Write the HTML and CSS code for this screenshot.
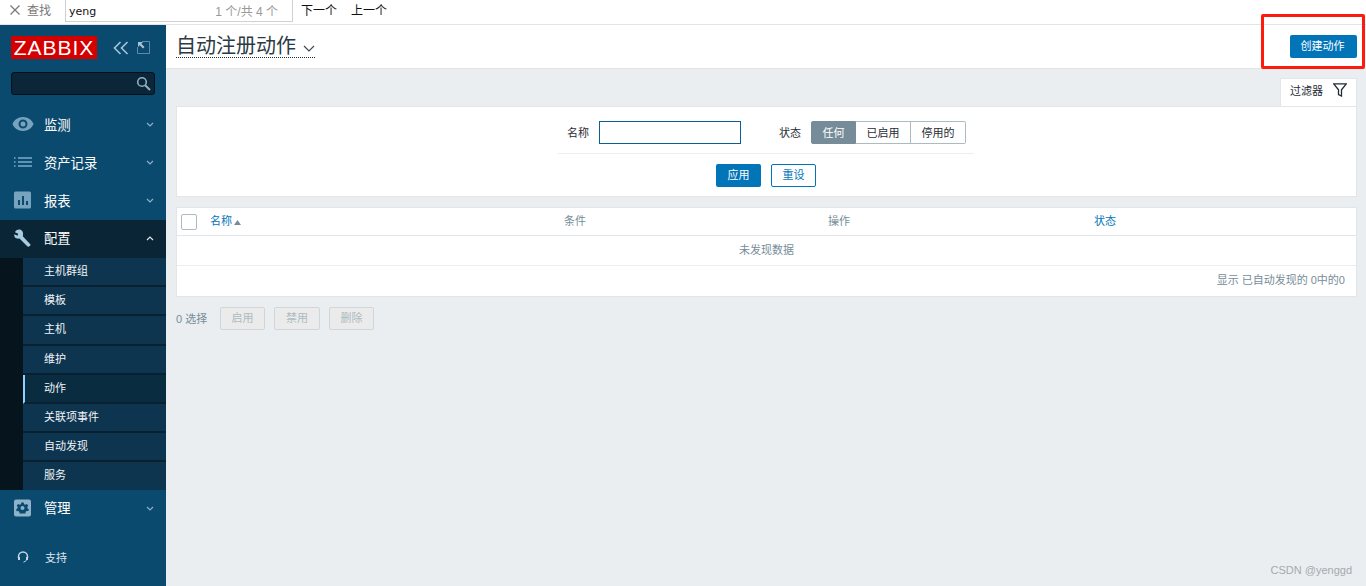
FILE: index.html
```html
<!DOCTYPE html>
<html lang="zh">
<head>
<meta charset="utf-8">
<title>自动注册动作</title>
<link rel="stylesheet" href="styles.css">
</head>
<body>
<div class="findbar">
  <svg class="find-x" width="10" height="10" viewBox="0 0 10 10"><path d="M0.5 0.5L9.5 9.5M9.5 0.5L0.5 9.5" stroke="#777" stroke-width="1.2" fill="none"/></svg>
  <span class="find-label">查找</span>
  <div class="find-input"><span class="find-q">yeng</span><span class="find-count">1 个/共 4 个</span></div>
  <span class="find-btn find-next">下一个</span>
  <span class="find-btn">上一个</span>
</div>
<div class="app">
  <aside class="sidebar">
    <div class="brand">
      <div class="logo">ZABBIX</div>
      <svg class="collapse" width="16" height="14" viewBox="0 0 16 14"><path d="M7.5 1L1.5 7L7.5 13M14.5 1L8.5 7L14.5 13" stroke="#a9c4d6" stroke-width="1.6" fill="none"/></svg>
      <svg class="kiosk" width="13" height="13" viewBox="0 0 13 13"><path d="M5 .5H12.5V12.5H.5V6" stroke="#5d8aa6" fill="none"/><path d="M1 1H6L4.3 2.7L7.5 6L6 7.5L2.7 4.3L1 6Z" fill="#a9c4d6"/></svg>
    </div>
    <div class="search">
      <svg width="15" height="15" viewBox="0 0 15 15"><circle cx="6" cy="6" r="4.3" stroke="#8fb0c4" stroke-width="1.6" fill="none"/><path d="M9.2 9.2L14 14" stroke="#8fb0c4" stroke-width="2" fill="none"/></svg>
    </div>
    <nav class="menu">
      <div class="menu-item">
        <svg class="menu-icon" width="22" height="16" viewBox="0 0 22 16"><path fill-rule="evenodd" d="M11 1C6 1 2 4 0.5 8C2 12 6 15 11 15S20 12 21.500 8C20 4 16 1 11 1ZM11 3.500A4.500 4.500 0 1 1 11 12.500A4.500 4.500 0 1 1 11 3.500Z" fill="#77a3bf"/><circle cx="11" cy="8" r="2.500" fill="#77a3bf"/></svg>
        <span class="menu-text">监测</span>
        <svg class="chev" width="8" height="5" viewBox="0 0 8 5"><path d="M1 1L4 4L7 1" stroke="#8fb0c4" stroke-width="1.200" fill="none"/></svg>
      </div>
      <div class="menu-item">
        <svg class="menu-icon" width="22" height="16" viewBox="0 0 22 16"><path d="M2 2.500H3.500M6 2.500H20M2 6.500H3.500M6 6.500H20M2 10.500H3.500M6 10.500H20" stroke="#5f93b3" stroke-width="2" fill="none" transform="translate(0 1.500)"/></svg>
        <span class="menu-text">资产记录</span>
        <svg class="chev" width="8" height="5" viewBox="0 0 8 5"><path d="M1 1L4 4L7 1" stroke="#8fb0c4" stroke-width="1.200" fill="none"/></svg>
      </div>
      <div class="menu-item">
        <svg class="menu-icon" width="22" height="18" viewBox="0 0 22 18"><rect x="2" y="0.500" width="17" height="17" rx="1.500" fill="#77a3bf"/><path d="M6 9H8V14H6ZM10 5H12V14H10ZM14 10H16V14H14Z" fill="#0b4a6f"/></svg>
        <span class="menu-text">报表</span>
        <svg class="chev" width="8" height="5" viewBox="0 0 8 5"><path d="M1 1L4 4L7 1" stroke="#8fb0c4" stroke-width="1.200" fill="none"/></svg>
      </div>
      <div class="menu-item menu-open">
        <svg class="menu-icon" width="22" height="18" viewBox="0 0 22 18"><path d="M9 1C6.500 0 3.800 1 3 3.200L6.200 4.800L5.500 6.800L2.300 5.200C1.800 8 4 10.200 7.500 9.500L15.500 17.500C16.500 18 18.500 17.200 18.500 15.500L10.800 7.200C11.500 4.500 11 2.200 9 1Z" fill="#a9cbe0"/></svg>
        <span class="menu-text menu-text-open">配置</span>
        <svg class="chev" width="8" height="5" viewBox="0 0 8 5"><path d="M1 4L4 1L7 4" stroke="#dfe8ee" stroke-width="1.200" fill="none"/></svg>
      </div>
      <ul class="submenu">
        <li class="sub-item">主机群组</li>
        <li class="sub-item">模板</li>
        <li class="sub-item">主机</li>
        <li class="sub-item">维护</li>
        <li class="sub-item sub-active">动作</li>
        <li class="sub-item">关联项事件</li>
        <li class="sub-item">自动发现</li>
        <li class="sub-item">服务</li>
      </ul>
      <div class="menu-item">
        <svg class="menu-icon" width="22" height="18" viewBox="0 0 22 18"><rect x="2" y="0.500" width="17" height="17" rx="2" fill="#8db2ca"/><path fill-rule="evenodd" d="M9.300 3.500H11.700L12 5.200L13.300 5.800L14.800 4.900L16.300 6.600L15.300 8L15.600 9.500L16.900 10.200L16.300 12L14.600 11.900L13.500 13L13.500 14.500H7.500V13L6.400 12L4.700 12.200L4.100 10.200L5.400 9.500L5.700 8L4.700 6.600L6.200 4.900L7.700 5.800L9 5.200ZM10.500 7A2 2 0 1 0 10.500 11A2 2 0 1 0 10.500 7Z" fill="#0b4a6f"/></svg>
        <span class="menu-text menu-text-open">管理</span>
        <svg class="chev" width="8" height="5" viewBox="0 0 8 5"><path d="M1 1L4 4L7 1" stroke="#8fb0c4" stroke-width="1.200" fill="none"/></svg>
      </div>
    </nav>
    <div class="support">
      <svg class="support-icon" width="12" height="12" viewBox="0 0 12 12"><path d="M1.500 7V5.500A4.500 4.500 0 0 1 10.500 5.500V7" stroke="#c3d6e2" stroke-width="1.500" fill="none"/><path d="M1 6H3V9H1ZM9 6H11V9H9Z" fill="#c3d6e2"/><path d="M9.500 9.500L6.500 11.200" stroke="#c3d6e2" fill="none"/></svg>
      <span class="support-text">支持</span>
    </div>
  </aside>
  <main class="main">
    <header class="page-head">
      <h1 class="title"><span>自动注册动作</span><svg width="12" height="7" viewBox="0 0 12 7"><path d="M1 1L6 6L11 1" stroke="#3a4b57" stroke-width="1.200" fill="none"/></svg></h1>
      <button class="btn btn-primary btn-create">创建动作</button>
    </header>
    <section class="content">
      <div class="filter-tabs">
        <div class="filter-tab">过滤器<svg width="14" height="14" viewBox="0 0 14 14"><path d="M0.700 0.800H13.300L8.500 6.800V13L5.500 11.500V6.800Z" stroke="#1f2c33" stroke-width="1.300" fill="none"/></svg></div>
      </div>
      <div class="filter-panel">
        <div class="filter-row">
          <label class="f-label">名称</label>
          <div class="f-input"></div>
          <label class="f-label f-status">状态</label>
          <div class="segment">
            <span class="seg seg-on">任何</span>
            <span class="seg">已启用</span>
            <span class="seg">停用的</span>
          </div>
        </div>
        <div class="filter-actions">
          <button class="btn btn-primary btn-act">应用</button>
          <button class="btn btn-outline btn-act">重设</button>
        </div>
      </div>
      <div class="table">
        <div class="t-head">
          <div class="t-check"><span class="checkbox"></span></div>
          <div class="t-col col-name link">名称<svg width="7" height="5" viewBox="0 0 7 5"><path d="M3.500 0L7 5H0Z" fill="#768d99"/></svg></div>
          <div class="t-col col-cond">条件</div>
          <div class="t-col col-op">操作</div>
          <div class="t-col link">状态</div>
        </div>
        <div class="t-empty">未发现数据</div>
        <div class="t-foot">显示 已自动发现的 0中的0</div>
      </div>
      <div class="actions">
        <span class="selected">0 选择</span>
        <button class="btn btn-dis">启用</button>
        <button class="btn btn-dis btn-dis-wide">禁用</button>
        <button class="btn btn-dis">删除</button>
      </div>
    </section>
  </main>
</div>
<div class="annot"></div>
<div class="watermark">CSDN @yenggd</div>
</body>
</html>
```
FILE: styles.css
```css
* { box-sizing: border-box; }
html, body { margin: 0; padding: 0; height: 100%; overflow: hidden; }
body {
  position: relative;
  background: #ebeef0;
  font-family: "Liberation Sans", "Noto Sans CJK SC", sans-serif;
  font-size: 12px;
  color: #1f2c33;
}
.findbar {
  height: 25px;
  background: #fff;
  border-bottom: 1px solid #e3e5e6;
  display: flex;
  align-items: center;
  padding-left: 10px;
}
.find-x { margin: -4px 7px 0 0; }
.find-label { color: #777; width: 38px; font-size: 12px; margin-top: -5px; }
.find-input {
  width: 228px;
  height: 22px;
  margin-top: -2px;
  border: 1px solid #d0d0d0;
  border-top: 0;
  padding: 0 14px 0 3px;
  display: flex;
  justify-content: space-between;
  align-items: center;
}
.find-q { color: #111; font-family: "DejaVu Sans", sans-serif; font-size: 11px; margin-top: 1px; }
.find-count { color: #999; font-size: 12px; }
.find-btn { color: #111; font-size: 12px; margin-left: 14px; margin-top: -5px; }
.find-next { margin-left: 8px; }
.app { display: flex; height: 561px; }
.sidebar {
  width: 166px;
  flex: none;
  background: #0b4a6f;
  display: flex;
  flex-direction: column;
}
.brand { display: flex; align-items: center; padding: 11px 0 0 11px; height: 34px; }
.logo {
  width: 86px;
  height: 23px;
  background: #d40000;
  color: #fff;
  font-size: 21px;
  line-height: 23px;
  text-align: center;
  letter-spacing: 1px;
}
.collapse { margin-left: 16px; }
.kiosk { margin-left: 8px; }
.search {
  margin: 13px 11px 0;
  height: 23px;
  background: #0b2638;
  border: 1px solid #04121b;
  border-radius: 3px;
  display: flex;
  align-items: center;
  justify-content: flex-end;
  padding-right: 3px;
}
.menu { margin-top: 11px; }
.menu-item {
  height: 38px;
  display: flex;
  align-items: center;
  padding: 0 12px 2px;
  color: #fff;
}
.menu-icon { flex: none; width: 22px; }
.menu-text { font-size: 13.3px; margin: 0 0 0 10px; flex: 1; }
.menu-text-open { margin-top: -2px; }
.chev { flex: none; margin-right: 0; }
.menu-open { background: #0a2535; }
.submenu {
  list-style: none;
  margin: 0;
  padding: 0 0 0 23px;
  background: #05141d;
  height: 232px;
}
.sub-item {
  height: 29.2px;
  line-height: 27px;
  background: #0e3550;
  border-bottom: 2px solid #08202f;
  padding-left: 21px;
  color: #f0f4f6;
  font-size: 11px;
  letter-spacing: 0;
}
.sub-item:first-child { line-height: 26px; }
.sub-item:last-child { height: 27.8px; border-bottom: 0; }
.sub-active { background: #0a2c41; border-left: 2px solid #8fd0ff; padding-left: 19px; }
.support { display: flex; align-items: center; padding: 21px 0 0 17px; }
.support-icon { flex: none; }
.support-text { margin-left: 16px; color: #dce6ec; font-size: 11px; }
.main { flex: 1; min-width: 0; display: flex; flex-direction: column; }
.page-head {
  height: 44px;
  background: #fff;
  border-bottom: 1px solid #e1e4e6;
  display: flex;
  align-items: center;
  justify-content: space-between;
  padding: 0 9px 0 10px;
}
.title {
  margin: 0;
  font-size: 20px;
  font-weight: 400;
  line-height: 20px;
  height: 22px;
  color: #2b3a44;
  border-bottom: 1px dotted #1f2c33;
  display: flex;
  align-items: center;
}
.title svg { margin: 4px 0 0 7px; }
.btn {
  font: inherit;
  font-size: 11px;
  height: 23px;
  padding: 0 0 3px;
  border-radius: 2px;
  border: 1px solid transparent;
}
.btn-primary { background: #0275b8; color: #fff; }
.btn-outline { background: #fff; color: #0275b8; border-color: #0275b8; }
.btn-create { width: 67px; margin-top: 0; padding-right: 2px; }
.btn-act { width: 45px; }
.btn-dis { width: 45px; background: #ebebeb; border-color: #cfd6da; color: #acbbc2; font-size: 11px; }
.btn-dis-wide { width: 46px; }
.content { padding: 9px 9px 0 10px; }
.filter-tabs { display: flex; justify-content: flex-end; }
.filter-tab {
  width: 77px;
  height: 28px;
  background: #fff;
  border: 1px solid #e3e6e8;
  border-bottom: 0;
  display: flex;
  align-items: center;
  justify-content: space-between;
  padding: 0 9px 6px;
  font-size: 11px;
}
.filter-panel {
  background: #fff;
  border: 1px solid #e3e6e8;
  height: 91px;
  padding-top: 14px;
  display: flex;
  flex-direction: column;
  align-items: center;
}
.filter-row {
  width: 416px;
  height: 33px;
  border-bottom: 1px solid #ebeef0;
  display: flex;
  align-items: flex-start;
  margin-left: -1px;
  padding-left: 9px;
}
.f-label { font-size: 11px; line-height: 25px; }
.f-input {
  width: 142px;
  height: 23px;
  margin-left: 10px;
  border: 1px solid #0b5f92;
}
.f-status { margin-left: 38px; margin-right: 10px; }
.segment { display: flex; height: 23px; }
.seg {
  height: 23px;
  line-height: 22px;
  border: 1px solid #acbbc2;
  border-left: 0;
  text-align: center;
  width: 55px;
  font-size: 11px;
}
.seg:first-child { width: 45px; border-radius: 2px 0 0 2px; border-left: 1px solid #768d99; }
.seg:last-child { border-radius: 0 2px 2px 0; }
.seg-on { background: #768d99; border-color: #768d99; color: #fff; }
.filter-actions { display: flex; gap: 10px; margin: 10px 1px 0 0; }
.table {
  margin-top: 10px;
  background: #fff;
  border: 1px solid #e3e6e8;
  height: 90px;
}
.t-head {
  height: 28px;
  border-bottom: 1px solid #e3e6e8;
  display: grid;
  grid-template-columns: 33px 354px 264px 266px 1fr;
  align-items: center;
  padding-bottom: 3px;
}
.t-check { display: flex; padding-left: 4px; margin-top: 3px; }
.checkbox { width: 16px; height: 16px; border: 1px solid #acbbc2; border-radius: 2px; }
.t-col { font-size: 11px; color: #768d99; }
.col-name svg { margin-left: 2px; }
.link { color: #0275b8; }
.t-empty {
  height: 30px;
  line-height: 29px;
  text-align: center;
  border-bottom: 1px solid #ebeef0;
  color: #768d99;
  font-size: 11px;
}
.t-foot {
  height: 30px;
  line-height: 29px;
  text-align: right;
  padding-right: 11px;
  color: #768d99;
  font-size: 11px;
}
.actions { display: flex; align-items: center; margin-top: 10px; gap: 9px; }
.selected { width: 35px; color: #768d99; font-size: 11px; white-space: nowrap; margin-top: -1px; }
.annot {
  position: absolute;
  left: 1261px;
  top: 14px;
  width: 104px;
  height: 55px;
  border: 3px solid #ff1a0e;
  border-radius: 2px;
}
.watermark {
  position: absolute;
  right: 14px;
  top: 564px;
  color: #a3aaae;
  font-size: 11px;
}
```
